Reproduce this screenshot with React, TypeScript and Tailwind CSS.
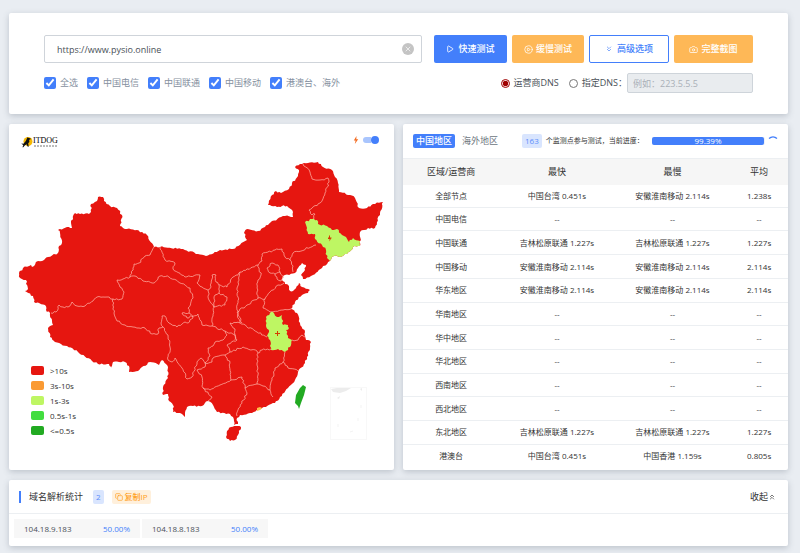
import { useState } from "react";
import { Camera, ChevronsDown, ChevronsUp, CirclePlay, Copy, Play, X } from "lucide-react";

type Point = [number, number];

const carriers = ["全选", "中国电信", "中国联通", "中国移动", "港澳台、海外"];

const legend = [
  { label: ">10s", color: "bg-[#e61610]" },
  { label: "3s-10s", color: "bg-[#fa9a33]" },
  { label: "1s-3s", color: "bg-[#bef663]" },
  { label: "0.5s-1s", color: "bg-[#42dd3f]" },
  { label: "<=0.5s", color: "bg-[#22aa22]" },
];

const rows = [
  ["全部节点", "中国台湾 0.451s", "安徽淮南移动 2.114s", "1.238s"],
  ["中国电信", "--", "--", "--"],
  ["中国联通", "吉林松原联通 1.227s", "吉林松原联通 1.227s", "1.227s"],
  ["中国移动", "安徽淮南移动 2.114s", "安徽淮南移动 2.114s", "2.114s"],
  ["华东地区", "安徽淮南移动 2.114s", "安徽淮南移动 2.114s", "2.114s"],
  ["华南地区", "--", "--", "--"],
  ["华中地区", "--", "--", "--"],
  ["华北地区", "--", "--", "--"],
  ["西南地区", "--", "--", "--"],
  ["西北地区", "--", "--", "--"],
  ["东北地区", "吉林松原联通 1.227s", "吉林松原联通 1.227s", "1.227s"],
  ["港澳台", "中国台湾 0.451s", "中国香港 1.159s", "0.805s"],
];

const addresses = [
  { ip: "104.18.9.183", share: "50.00%" },
  { ip: "104.18.8.183", share: "50.00%" },
];

const mainland =
  "19,273 23,268 31,265 32,267 38,261 44,260 48,257 58,253 59,246 62,243 60,233 58,230 67,227 72,228 71,223 75,213 80,214 89,214 91,212 91,204 97,201 98,197 103,197 104,201 110,206 117,208 122,215 120,226 123,228 137,230 147,235 154,247 160,247 183,249 198,254 206,256 220,250 233,249 247,240 244,233 247,229 258,231 265,227 272,221 285,216 293,217 293,212 287,206 282,206 277,207 268,205 272,195 276,191 281,193 289,189 292,183 298,176 299,170 295,167 300,164 318,162 323,167 332,170 335,177 338,183 339,192 350,195 355,198 359,208 367,208 373,204 383,202 380,213 375,228 368,228 360,232 360,246 353,247 347,254 340,257 334,256 330,261 322,268 313,275 303,279 301,275 305,270 306,265 302,263 295,273 283,276 282,280 285,284 289,286 290,291 293,291 299,283 302,287 310,290 308,293 302,295 295,302 291,309 297,313 300,323 305,332 306,340 311,342 310,348 307,357 305,363 298,372 295,380 288,388 280,397 275,403 262,408 250,413 240,415 237,418 238,424 234,425 233,417 230,414 217,412 213,405 208,401 202,406 193,406 187,407 185,417 180,413 173,412 173,405 169,401 168,394 163,395 163,387 168,378 168,367 162,360 159,365 150,362 142,367 138,371 129,372 129,366 125,362 113,362 111,369 109,364 98,364 92,361 78,352 67,346 55,342 50,337 48,328 53,325 50,313 46,310 45,305 34,302 33,296 25,291 28,289 26,280 20,278";

const hainan = "227,431 231,427 236,426 241,427 239,433 235,440 230,441 226,437";

const jilin =
  "305,222 312,219 317,220 318,224 327,226 332,230 337,229 342,235 346,237 349,242 353,238 360,241 360,246 353,247 347,254 340,257 334,256 330,261 327,258 326,250 322,245 315,239 315,234 308,234 307,228";

const anhui =
  "270,313 273,312 277,317 282,315 283,325 288,325 289,328 286,330 288,338 292,340 290,347 285,352 278,349 271,350 270,340 267,336 269,332 266,325 266,317";

const borders = [
  "51,313 56,312 59,305 63,307 68,307 72,302 77,306 85,306 93,301 97,297 107,297 113,299 122,299 124,292 120,287 117,280 123,279 130,277 133,268 134,264 139,263 145,256 150,255 154,247",
  "130,277 135,276 143,281 154,283 160,276 169,277 180,283 190,288 193,298 188,308 189,313",
  "160,247 165,260 175,263 173,269 185,277 200,275 197,283 202,287 208,290 209,300 214,307 213,316 212,326",
  "208,290 211,287 212,275 216,275 216,282 220,285 227,287 233,277 238,275 240,272 258,265",
  "219,285 219,293 227,297 225,305 214,307 215,295 219,293",
  "240,272 237,288 238,297 237,310 242,323",
  "258,265 259,268 261,275 258,280 257,292 258,298 247,305 237,312",
  "258,298 265,299 270,292 278,285 284,283",
  "258,265 262,261 262,254 275,250 282,249 285,257 290,260 293,253 316,245",
  "290,260 293,266 293,272",
  "267,268 272,263 278,265 280,272 275,274 270,273 267,268",
  "280,272 284,277 281,281 277,279 275,274",
  "303,164 310,172 312,179 320,180 328,178 329,182 325,193 320,203 309,210 312,215 315,214 313,220",
  "113,299 114,313 117,321 125,325 133,327 145,328 152,334 158,334 159,328 163,327",
  "163,327 161,323 162,316 165,316 169,323 177,327 185,322 188,323 193,318 189,313",
  "163,327 168,335 170,347 168,360 172,362 175,358 182,368 187,379 192,377 197,362 201,358 205,363",
  "189,313 182,313 187,318 198,314 202,325 212,326 225,331 227,335 223,340 215,342 213,346 208,348 210,356 205,363",
  "205,363 212,362 213,358 225,355 230,363 231,380 220,385 210,390 203,388 202,377 197,370 205,367 205,363",
  "225,331 235,335 237,340 227,345 230,352 225,355",
  "203,388 212,397 208,401",
  "231,380 242,377 245,388 247,393 238,410 237,416",
  "230,352 243,347 257,351 258,353 257,363 258,375 257,384 247,387 245,388",
  "237,312 240,323 257,332 267,337",
  "230,323 240,323",
  "230,323 235,329 235,340",
  "258,353 262,350 271,349",
  "285,352 283,362 275,368 272,380 270,390 273,397",
  "257,384 263,386 270,390",
  "283,362 288,368 298,371",
  "292,340 298,340 302,335 305,337",
  "265,299 263,308 272,312 283,310 291,309",
];

// Splits every segment and nudges the new points, so that borders look surveyed.
const roughen = (points: string, closed = false) => {
  const list = points.split(" ").map((p) => p.split(",").map(Number) as Point);
  if (closed) list.push(list[0]);
  const out: Point[] = [list[0]];
  for (let i = 1; i < list.length; i++) {
    const [ax, ay] = list[i - 1];
    const [bx, by] = list[i];
    const length = Math.hypot(bx - ax, by - ay);
    const steps = Math.max(1, Math.round(length / 2));
    for (let s = 1; s < steps; s++) {
      const t = s / steps;
      const noise = Math.sin(ax * 127 + by * 311 + s * 74.7) * 4375;
      const shift = (noise - Math.floor(noise) - 0.5) * 1.8;
      out.push([
        ax + (bx - ax) * t + ((by - ay) / length) * shift,
        ay + (by - ay) * t - ((bx - ax) / length) * shift,
      ]);
    }
    out.push([bx, by]);
  }
  return out.map(([x, y]) => `${x.toFixed(1)},${y.toFixed(1)}`).join(" ");
};

const ChinaMap = () => (
  <svg viewBox="9 124 385 346" className="block w-full" role="img" aria-label="中国地图">
    <polygon points={roughen(mainland, true)} fill="#e61610" />
    <polygon points={roughen(hainan, true)} fill="#e61610" />
    {borders.map((line, index) => (
      <polyline
        key={index}
        points={roughen(line)}
        fill="none"
        stroke="#ffb9ae"
        strokeWidth="0.7"
        strokeLinejoin="round"
      />
    ))}
    <polygon points={roughen(jilin, true)} fill="#bef663" />
    <polygon points={roughen(anhui, true)} fill="#bef663" />
    <polygon points="303,385 306,387 304,395 301,403 299,409 298,406 295,403 296,395 300,388" fill="#22aa22" />
    <path d="M257 408l3-1 2 1-2 2-3 1z" fill="#ffc14a" />
    {/* Slow node markers */}
    <path d="M329 235.500h1v2h1.500v1H331l-1.500 3v-2.500H328v-1.500h1z" fill="#d43a00" />
    <path d="M277 331h1v2h2v1h-2v2h-1v-2h-2v-1h2z" fill="#d43a00" />
    {/* South China Sea inset */}
    <rect x="330.5" y="387.5" width="36" height="52" fill="none" stroke="#f8f8f8" />
    <path d="M331 389l6-1h14l-5 3-6 2-7-1zM337 398l3-2-1 3zM360 389l2-1v3z" fill="#ececec" />
    <path d="M361 405v3M358 418v3M350 432l3-1M338 424v3" stroke="#f3f3f3" />
  </svg>
);

const Logo = () => (
  <div className="absolute left-3 top-3 flex items-center">
    <svg viewBox="0 0 12 12" className="w-3 h-3" aria-hidden="true">
      <circle cx="7" cy="5.5" r="4.5" fill="#f6b800" />
      <path
        d="M6.5 1.2l1.3.9 2 .3-.4 1.1-1.3.3.3 2.3-1.2 1.2.5 3.5h-.9L5.600 8.300 4 9.200 2.300 11.200H1.400l.9-2L.3 7.500l2.200.2L4.800 5z"
        fill="#111"
      />
    </svg>
    <div className="flex flex-col">
      <span className="font-['Liberation_Serif',serif] text-[8px] leading-2 text-black">ITDOG</span>
      <svg viewBox="0 0 26 2" className="w-[26px] h-0.5" aria-hidden="true">
        <path d="M1 1h24" stroke="#777" strokeDasharray="2 1" />
      </svg>
    </div>
  </div>
);

const App = () => {
  const [url, setUrl] = useState("https://www.pysio.online");
  const [dns, setDns] = useState("carrier");
  const [spark, setSpark] = useState(true);

  return (
    <div className="min-h-screen bg-[#e9edf2] pl-[9px] pr-3 pt-[13px] pb-[7px] flex flex-col gap-2.5 font-['Open_Sans','Noto_Sans_CJK_SC',sans-serif] text-[9px] leading-3 text-[#495057]">
      {/* Test form */}
      <form className="bg-white rounded-xs shadow-[0_2px_6px_rgba(60,70,90,0.25)] px-[35px] pt-[22px] pb-[21px] flex flex-col gap-2.5">
        <div className="flex items-center gap-3">
          <div className="relative flex-1">
            <input
              aria-label="网址"
              value={url}
              onChange={(e) => setUrl(e.target.value)}
              className="block w-full h-7 pl-3 pr-6 border border-[#cfd4da] rounded-xs outline-none"
            />
            <button
              type="button"
              aria-label="清空"
              onClick={() => setUrl("")}
              className="absolute right-2 top-2 w-3 h-3 rounded-full bg-[#c4c4c4] text-white flex items-center justify-center"
            >
              <X size={8} />
            </button>
          </div>
          <div className="flex gap-[5px] text-white font-medium">
            <button type="button" className="w-[73px] h-7 rounded-xs bg-[#437ffb] flex items-center justify-center gap-1">
              <Play size={8} strokeWidth={2.5} />
              快速测试
            </button>
            <button type="button" className="w-[72px] h-7 rounded-xs bg-[#feb857] flex items-center justify-center gap-[3px]">
              <CirclePlay size={9} />
              缓慢测试
            </button>
            <button
              type="button"
              className="w-20 h-7 rounded-xs border border-[#437ffb] text-[#437ffb] flex items-center justify-center gap-1"
            >
              <ChevronsDown size={8} />
              高级选项
            </button>
            <button type="button" className="w-[79px] h-7 rounded-xs bg-[#feb857] flex items-center justify-center gap-[3px]">
              <Camera size={9} />
              完整截图
            </button>
          </div>
        </div>

        <div className="flex items-center justify-between">
          <div className="flex items-center gap-[9px] text-[#8590a0]">
            {carriers.map((name) => (
              <label key={name} className="flex items-center gap-1">
                <input type="checkbox" defaultChecked className="w-3 h-3 accent-[#437ffb]" />
                {name}
              </label>
            ))}
          </div>
          <div className="flex items-center">
            <label className="flex items-center gap-1">
              <input
                type="radio"
                name="dns"
                checked={dns === "carrier"}
                onChange={() => setDns("carrier")}
                className="w-[9px] h-[9px] accent-[#a00000]"
              />
              运营商DNS
            </label>
            <label className="flex items-center gap-1 ml-2.5">
              <input
                type="radio"
                name="dns"
                checked={dns === "custom"}
                onChange={() => setDns("custom")}
                className="w-[9px] h-[9px] accent-[#a00000]"
              />
              指定DNS：
            </label>
            <input
              aria-label="指定DNS"
              placeholder="例如：223.5.5.5"
              disabled={dns === "carrier"}
              className="w-[126px] h-5 px-[5px] border border-[#ced4da] rounded-xs bg-[#e9ecef] placeholder:text-[#a9b0b8]"
            />
          </div>
        </div>
      </form>

      <div className="grid grid-cols-2 gap-[9px]">
        {/* Map */}
        <section className="relative bg-white rounded-xs shadow-[0_2px_6px_rgba(60,70,90,0.25)]">
          <ChinaMap />
          <Logo />
          <div className="absolute right-[15px] top-3 flex items-center gap-1">
            <svg viewBox="0 0 6 8" className="w-1.5 h-2" aria-hidden="true">
              <path d="M3.500 0L.8 4.500h1.800L1.800 8l3.400-4.800H3.300z" fill="#f36b21" />
            </svg>
            <button
              type="button"
              role="switch"
              aria-checked={spark}
              aria-label="标记"
              onClick={() => setSpark(!spark)}
              className="w-4 h-2 flex items-center justify-end"
            >
              <span className="flex-1 h-1.5 rounded-l-full bg-[#a9c5fd]" />
              <span className="w-2 h-2 rounded-full bg-[#437ffb]" />
            </button>
          </div>
          <ul className="absolute left-[22px] bottom-8 text-[8px] text-[#333]">
            {legend.map((item) => (
              <li key={item.label} className="flex items-center gap-1.5 h-[15px]">
                <span className={`w-[13px] h-[9px] rounded-xs ${item.color}`} />
                {item.label}
              </li>
            ))}
          </ul>
        </section>

        {/* Region results */}
        <section className="bg-white rounded-xs shadow-[0_2px_6px_rgba(60,70,90,0.25)] flex flex-col pb-[3px]">
          <div className="h-[34px] px-2.5 flex items-center">
            <button type="button" className="h-3.5 px-[3px] rounded-xs bg-[#437ffb] text-white font-medium">
              中国地区
            </button>
            <button type="button" className="ml-[7px] text-[#6c757d]">
              海外地区
            </button>
            <span className="ml-6 h-3.5 px-[3px] rounded-xs bg-[#d9e5fe] text-[#5b8efb] text-[8px] leading-3.5">163</span>
            <span className="ml-1 text-[7px] text-[#333]">个监测点参与测试，当前进度：</span>
            <div className="flex-1 ml-2 h-2 rounded-xs bg-[#eef1f5]">
              <div
                className="h-2 rounded-xs bg-[#437ffb] text-white text-[8px] leading-2 text-center"
                style={{ width: "99.39%" }}
              >
                99.39%
              </div>
            </div>
            <svg viewBox="0 0 10 10" className="ml-[3px] w-2.5 h-2.5" aria-hidden="true">
              <path d="M1 2.500a6 6 0 0 1 8 0" fill="none" stroke="#437ffb" strokeWidth="1.300" />
            </svg>
          </div>
          <div className="flex-1 grid">
            <table className="w-full h-full table-fixed text-center text-[8px] text-[#333]">
              <thead>
                <tr className="h-[26px] bg-[#f6f6f6] border-t border-[#eceff2] text-[9px]">
                  <th className="w-[25%] font-normal">区域/运营商</th>
                  <th className="w-[30%] font-normal">最快</th>
                  <th className="w-[30%] font-normal">最慢</th>
                  <th className="w-[15%] font-normal">平均</th>
                </tr>
              </thead>
              <tbody>
                {rows.map((row) => (
                  <tr key={row[0]} className="border-b border-[#eceff2] last:border-b-0">
                    {row.map((cell, index) => (
                      <td key={index}>{cell}</td>
                    ))}
                  </tr>
                ))}
              </tbody>
            </table>
          </div>
        </section>
      </div>

      {/* Resolved addresses */}
      <section className="bg-white rounded-xs shadow-[0_2px_6px_rgba(60,70,90,0.25)]">
        <div className="h-[34px] pl-2.5 pr-3 flex items-center border-b border-[#eceff2]">
          <span className="w-0.5 h-3 bg-[#437ffb]" />
          <h2 className="ml-2 text-[#333]">域名解析统计</h2>
          <span className="ml-2.5 h-3.5 px-[3px] rounded-xs bg-[#d9e5fe] text-[#5b8efb] text-[8px] leading-3.5">2</span>
          <button
            type="button"
            className="ml-2 h-3.5 px-[3px] rounded-xs bg-[#fff0dc] text-[#ff9f1c] text-[8px] font-medium flex items-center gap-0.5"
          >
            <Copy size={8} />
            复制IP
          </button>
          <button type="button" className="ml-auto flex items-center text-[#333]">
            收起
            <ChevronsUp size={8} />
          </button>
        </div>
        <ul className="flex gap-0.5 px-[5px] pt-[5px] pb-2 text-[8px]">
          {addresses.map((item) => (
            <li key={item.ip} className="w-[126px] h-[19px] px-2.5 bg-[#f7f7f7] flex items-center justify-between">
              {item.ip}
              <span className="text-[#437ffb]">{item.share}</span>
            </li>
          ))}
        </ul>
      </section>
    </div>
  );
};

export default App;
